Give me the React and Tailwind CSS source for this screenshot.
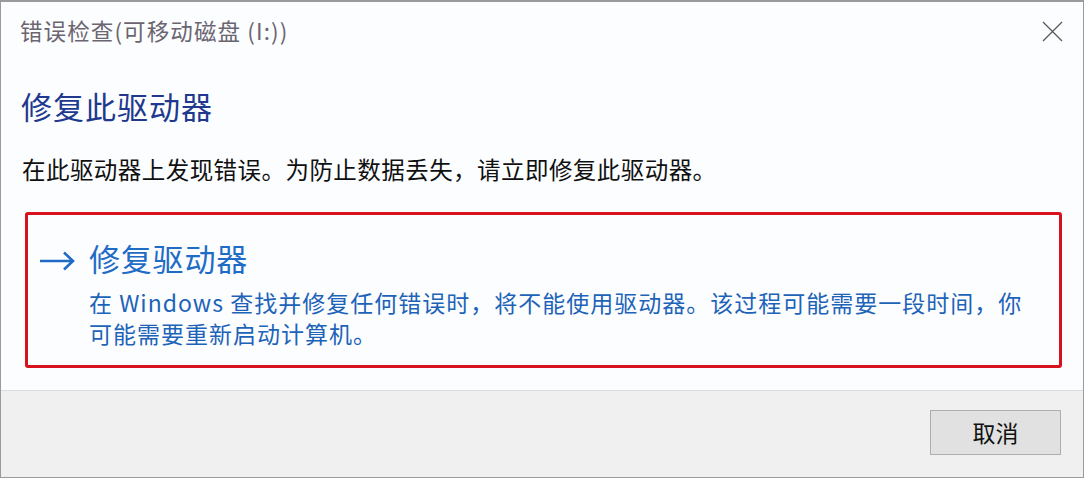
import React from 'react';

const cjk = { fontFamily: '"Noto Sans CJK SC", "Noto Sans", sans-serif' };

function CloseIcon() {
	return (
		<svg width="21" height="21" viewBox="0 0 21 21" className="text-[#5a5a5a]">
			<path d="M1 1 L20 20 M20 1 L1 20" stroke="currentColor" strokeWidth="1.3" fill="none" />
		</svg>
	);
}

function Arrow() {
	return (
		<svg width="36" height="20" viewBox="0 0 36 20" className="text-[#1f6cc6]">
			<path d="M1 10 H34 M25 1.5 L34 10 L25 18.5" stroke="currentColor" strokeWidth="2.6" fill="none" strokeLinejoin="miter" />
		</svg>
	);
}

export default function App() {
	return (
		<div style={cjk} className="w-[1084px] h-[478px] bg-[#fcfdff] border border-t-2 border-[#9a9a9a] flex flex-col overflow-hidden">
			<div className="h-[60px] flex items-start justify-between pl-[19px] pr-[20px] pt-[17px]">
				<span className="text-[22.5px] leading-[22px] tracking-[1.1px] text-[#6b6570]">错误检查(可移动磁盘 (I:))</span>
				<div className="pt-[2px]">
					<CloseIcon />
				</div>
			</div>

			<div className="flex-1 px-[20px]">
				<h1 className="text-[31px] leading-[31px] tracking-[1px] text-[#20398f] mt-[28px]">修复此驱动器</h1>
				<p className="text-[23.5px] leading-[24px] tracking-[0.45px] text-[#101010] mt-[36px] pl-[1px]">
					在此驱动器上发现错误。为防止数据丢失，请立即修复此驱动器。
				</p>

				<div className="mt-[31px] ml-[4px] w-[1037px] h-[156px] border-[3px] border-[#d8121c] rounded-[3px] pl-[11px] pt-[27px]">
					<div className="flex items-start">
						<div className="w-[50px] pt-[9px]">
							<Arrow />
						</div>
						<div>
							<div className="text-[31px] leading-[31px] tracking-[0.8px] text-[#1f6cc6]">修复驱动器</div>
							<p className="text-[23px] leading-[31px] tracking-[1px] text-[#1d63b8] mt-[14px]">
								在 Windows 查找并修复任何错误时，将不能使用驱动器。该过程可能需要一段时间，你
								<br />
								可能需要重新启动计算机。
							</p>
						</div>
					</div>
				</div>
			</div>

			<div className="h-[87px] bg-[#f0f0f0] border-t border-[#dcdcdc] flex justify-end items-start pt-[19px] pr-[22px]">
				<button className="w-[131px] h-[45px] bg-[#e1e1e1] border border-[#adadad] text-[23px] leading-[23px] text-[#111]">
					取消
				</button>
			</div>
		</div>
	);
}
